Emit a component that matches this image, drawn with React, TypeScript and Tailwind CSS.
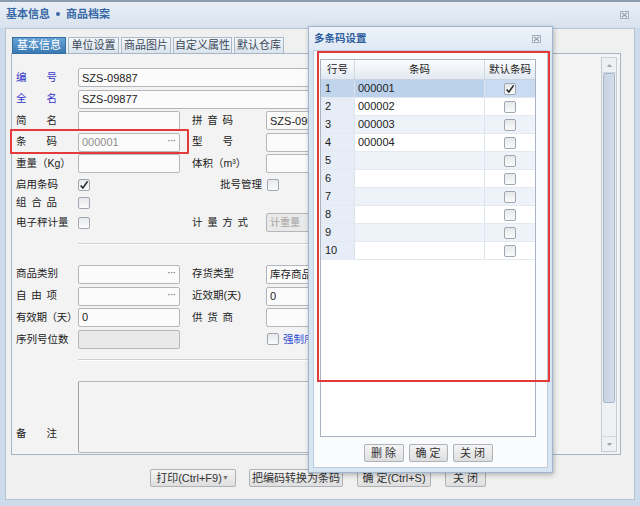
import React from "react";

const CloseIcon = () => (
  <svg width="9" height="8" viewBox="0 0 9 8">
    <rect x="0.5" y="0.5" width="8" height="7" fill="none" stroke="#a7b0ba" strokeWidth="1" />
    <path d="M2 1.8 L7 6.2 M7 1.8 L2 6.2" stroke="#8c97a3" strokeWidth="1.1" />
  </svg>
);

const Check = ({ checked }: { checked?: boolean }) => (
  <div className="w-[12px] h-[12px] border border-[#a0a7b0] rounded-[2px] bg-gradient-to-b from-[#e6e8ea] to-[#fbfbfb] flex items-center justify-center">
    {checked && (
      <svg width="10" height="10" viewBox="0 0 10 10">
        <path d="M1.6 5.4 L3.9 8 L8.6 1.4" stroke="#222" strokeWidth="1.5" fill="none" />
      </svg>
    )}
  </div>
);

function Spread({ t, className }: { t: string; className: string }) {
  return (
    <div className={"flex justify-between " + className}>
      {t.split("").map((c, i) => (
        <span key={i}>{c}</span>
      ))}
    </div>
  );
}

function Inp({
  className,
  children,
  dis,
  dots,
  muted,
}: {
  className: string;
  children?: React.ReactNode;
  dis?: boolean;
  dots?: boolean;
  muted?: boolean;
}) {
  return (
    <div
      className={
        "h-[19px] border border-[#b3b6bb] rounded-[2px] flex items-center justify-between pl-[3px] pr-[4px] text-[11px] whitespace-nowrap font-['Liberation_Sans','Noto_Sans_CJK_SC',sans-serif] " +
        (dis ? "bg-[#e9e9e9] " : "bg-[#fbfbfb] ") +
        (muted ? "text-[#8e8e8e] " : "text-[#222] ") +
        className
      }
    >
      <span className="truncate">{children}</span>
      {dots && <span className="text-[#666] tracking-[-1px] leading-none pb-[3px]">···</span>}
    </div>
  );
}

function Btn({ className, children }: { className: string; children: React.ReactNode }) {
  return (
    <div
      className={
        "h-[18px] border border-[#afb2b6] rounded-[2px] bg-gradient-to-b from-[#f5f5f5] to-[#dedede] flex items-center justify-center text-[11px] text-[#333] shrink-0 whitespace-nowrap " +
        className
      }
    >
      {children}
    </div>
  );
}

const LBL = "w-[62px] shrink-0 text-[10.5px] text-[#222] whitespace-nowrap";
const RLBL = "w-[74px] shrink-0 text-[10.5px] text-[#222] whitespace-nowrap";

export default function App() {
  const rows = Array.from({ length: 10 }, (_, i) => i + 1);
  const codes: Record<number, string> = { 1: "000001", 2: "000002", 3: "000003", 4: "000004" };

  return (
    <div className="w-[640px] h-[506px] relative overflow-hidden bg-[#cddbea] font-['Liberation_Sans','Noto_Sans_CJK_SC',sans-serif] text-[#222] select-none">
      {/* title bar */}
      <div className="h-[28px] border-t-[2px] border-[#8b9cb1] bg-gradient-to-b from-[#e9eff6] to-[#d8e2ed] flex items-center justify-between pl-[6px] pr-[11px]">
        <div className="text-[11px] font-bold text-[#3868a6] flex items-center gap-[6px] pb-[2px]">
          <span>基本信息</span>
          <span className="w-[4px] h-[4px] rounded-full bg-[#3868a6]" />
          <span>商品档案</span>
        </div>
        <CloseIcon />
      </div>

      {/* window body */}
      <div className="mx-[5px] h-[472px] bg-[#f0f0f0] border border-[#b4c4d6] flex flex-col pl-[5px] pt-[8px]">
        {/* tabs */}
        <div className="h-[17px] flex items-end gap-[2px] pl-[1px] relative z-10 -mb-[1px]">
          <div className="w-[54px] h-[17px] bg-gradient-to-b from-[#67a3d6] to-[#3a79b3] border border-[#356ea3] text-white text-[11px] flex items-center justify-center">
            基本信息
          </div>
          {[
            ["单位设置", "w-[51px]"],
            ["商品图片", "w-[50px]"],
            ["自定义属性", "w-[59px]"],
            ["默认仓库", "w-[50px]"],
          ].map(([t, w]) => (
            <div
              key={t}
              className={
                w +
                " h-[17px] bg-gradient-to-b from-[#f4f7fa] to-[#dae3ec] border border-[#a9bacb] border-b-[#a8b5c4] text-[#3b4a5b] text-[11px] flex items-center justify-center"
              }
            >
              {t}
            </div>
          ))}
        </div>

        {/* tab panel */}
        <div className="w-[610px] h-[402px] border border-[#a8b5c4] bg-[#f3f3f3] flex">
          <div className="flex-1 pl-[4px] pt-[13px] overflow-hidden">
            <div className="flex items-center h-[21.5px]">
              <Spread t="编号" className="w-[41px] mr-[21px] shrink-0 text-[10.5px] text-[#3535c8]" />
              <Inp className="w-[462px]">SZS-09887</Inp>
            </div>
            <div className="flex items-center h-[21.5px]">
              <Spread t="全名" className="w-[41px] mr-[21px] shrink-0 text-[10.5px] text-[#3535c8]" />
              <Inp className="w-[462px]">SZS-09877</Inp>
            </div>
            <div className="flex items-center h-[21.5px]">
              <Spread t="简名" className="w-[41px] mr-[21px] shrink-0 text-[10.5px]" />
              <Inp className="w-[102px]" />
              <div className="w-[12px] shrink-0" />
              <div className={RLBL}>
                <Spread t="拼音码" className="w-[41px]" />
              </div>
              <Inp className="w-[102px]">SZS-09877</Inp>
            </div>
            <div className="flex items-center h-[21.5px]">
              <Spread t="条码" className="w-[41px] mr-[21px] shrink-0 text-[10.5px]" />
              <Inp className="w-[102px]" dots muted>
                000001
              </Inp>
              <div className="w-[12px] shrink-0" />
              <div className={RLBL}>
                <Spread t="型号" className="w-[41px]" />
              </div>
              <Inp className="w-[102px]" />
            </div>
            <div className="flex items-center h-[21.5px]">
              <div className={LBL}>重量（Kg）</div>
              <Inp className="w-[102px]" />
              <div className="w-[12px] shrink-0" />
              <div className={RLBL}>体积（m³）</div>
              <Inp className="w-[102px]" />
            </div>
            <div className="flex items-center h-[19.5px] pt-[2px]">
              <div className={LBL}>启用条码</div>
              <Check checked />
              <div className="w-[102px] shrink-0" />
              <div className="w-[70px] shrink-0 text-[10.5px] text-right">批号管理</div>
              <div className="w-[5px] shrink-0" />
              <Check />
            </div>
            <div className="flex items-center h-[17px]">
              <Spread t="组合品" className="w-[41px] mr-[21px] shrink-0 text-[10.5px]" />
              <Check />
            </div>
            <div className="flex items-center h-[23px]">
              <div className={LBL}>电子秤计量</div>
              <Check />
              <div className="w-[102px] shrink-0" />
              <div className={RLBL}>
                <Spread t="计量方式" className="w-[56px]" />
              </div>
              <Inp className="w-[102px]" dis muted>
                <span className="text-[10px] text-[#a5a5a5]">计重量</span>
              </Inp>
            </div>

            <div className="ml-[62px] w-[462px] h-0 border-t border-[#cfcfcf] border-b border-b-white mt-[8.5px]" />

            <div className="mt-[19px]">
              <div className="flex items-center h-[21.7px]">
                <div className={LBL}>商品类别</div>
                <Inp className="w-[102px]" dots />
                <div className="w-[12px] shrink-0" />
                <div className={RLBL}>存货类型</div>
                <Inp className="w-[102px]">
                  <span className="text-[10.5px]">库存商品</span>
                </Inp>
              </div>
              <div className="flex items-center h-[21.7px]">
                <Spread t="自由项" className="w-[41px] mr-[21px] shrink-0 text-[10.5px]" />
                <Inp className="w-[102px]" dots />
                <div className="w-[12px] shrink-0" />
                <div className={RLBL}>近效期(天)</div>
                <Inp className="w-[102px]">0</Inp>
              </div>
              <div className="flex items-center h-[21.7px]">
                <div className={LBL + " tracking-[-0.3px]"}>有效期（天）</div>
                <Inp className="w-[102px]">0</Inp>
                <div className="w-[12px] shrink-0" />
                <div className={RLBL}>
                  <Spread t="供货商" className="w-[41px]" />
                </div>
                <Inp className="w-[102px]" />
              </div>
              <div className="flex items-center h-[21.7px]">
                <div className={LBL}>序列号位数</div>
                <Inp className="w-[102px]" dis />
                <div className="w-[12px] shrink-0" />
                <div className="w-[74px] shrink-0" />
                <div className="flex items-center gap-[4px] pl-[1px]">
                  <Check />
                  <span className="text-[10.5px] text-[#2f4ed6] whitespace-nowrap">强制序列号</span>
                </div>
              </div>
            </div>

            <div className="ml-[62px] w-[462px] h-0 border-t border-[#cfcfcf] border-b border-b-white mt-[9px]" />

            <div className="flex mt-[20px]">
              <div className="w-[62px] shrink-0 h-[72px] flex items-end pb-[12px]">
                <Spread t="备注" className="w-[41px] text-[10.5px]" />
              </div>
              <div className="w-[462px] h-[72px] border border-[#b3b6bb] border-l-[#9ea3aa] bg-[#f4f4f4] rounded-[2px]" />
            </div>
          </div>

          {/* scrollbar */}
          <div className="w-[16px] h-[395px] mt-[3px] mr-[3px] border border-[#c9cdd3] bg-[#eef0f3] flex flex-col">
            <div className="h-[15px] flex items-center justify-center border-b border-[#d3d7dc]">
              <svg width="5" height="3" viewBox="0 0 5 3">
                <path d="M0 3 L2.5 0 L5 3 Z" fill="#9aa2ac" />
              </svg>
            </div>
            <div className="mx-[1px] h-[330px] bg-gradient-to-r from-[#c7d3e3] to-[#d3ddea] border border-[#a8b6c9] rounded-[2px]" />
            <div className="flex-1" />
            <div className="h-[15px] flex items-center justify-center border-t border-[#d3d7dc]">
              <svg width="5" height="3" viewBox="0 0 5 3">
                <path d="M0 0 L2.5 3 L5 0 Z" fill="#9aa2ac" />
              </svg>
            </div>
          </div>
        </div>

        {/* bottom buttons */}
        <div className="flex mt-[14px] pl-[139px]">
          <Btn className="w-[86px] justify-between pl-[5px] pr-[6px] text-[10.5px]">
            <span>打印(Ctrl+F9)</span>
            <span className="text-[7px] text-[#777]">▼</span>
          </Btn>
          <Btn className="w-[94px] ml-[13px] text-[10.5px]">把编码转换为条码</Btn>
          <Btn className="w-[74px] ml-[14px] text-[10.5px]">确 定(Ctrl+S)</Btn>
          <Btn className="w-[41px] ml-[14px] text-[10.5px]">关 闭</Btn>
        </div>
      </div>

      {/* red annotation on 条码 row */}
      <div className="absolute left-[10px] top-[129px] w-[179px] h-[25px] border-[2px] border-[#e33a3a] rounded-[1px] pointer-events-none" />

      {/* dialog window */}
      <div className="absolute left-[308px] top-[26px] w-[245px] h-[447px] border border-[#9fb6cf] bg-[#d7e5f3] shadow-[1px_2px_5px_rgba(0,0,0,0.25)] flex flex-col">
        <div className="h-[23px] shrink-0 flex items-center justify-between pl-[5px] pr-[11px] bg-gradient-to-b from-[#eef3f9] to-[#dfe9f4]">
          <span className="text-[10.5px] font-bold text-[#2d5d9e]">多条码设置</span>
          <CloseIcon />
        </div>
        <div className="mx-[4px] mb-[4px] flex-1 bg-[#fafbfc] border border-[#bccde0] pt-[8px] pl-[6px]">
          <div className="w-[216px] h-[378px] border border-[#aab3bf] bg-white flex flex-col">
            <div className="h-[20px] shrink-0 flex bg-gradient-to-b from-[#fbfcfe] to-[#e2e9f2] border-b border-[#c9d3df] text-[10.5px] text-[#222]">
              <div className="w-[34px] flex items-center justify-center border-r border-[#d1d9e3]">行号</div>
              <div className="w-[130px] flex items-center justify-center border-r border-[#d1d9e3]">条码</div>
              <div className="flex-1 flex items-center justify-center">默认条码</div>
            </div>
            {rows.map((r) => {
              const sel = r === 1;
              const odd = r % 2 === 1;
              return (
                <div
                  key={r}
                  className={
                    "h-[18px] shrink-0 flex text-[11px] border-b border-[#e4e9ef] " +
                    (sel ? "bg-[#c9dbf0]" : odd ? "bg-[#eef3fa]" : "bg-white")
                  }
                >
                  <div
                    className={
                      "w-[34px] flex items-center pl-[4px] border-r border-[#dde4ec] " +
                      (sel ? "bg-[#c0d4ec]" : "bg-[#e6edf6]")
                    }
                  >
                    {r}
                  </div>
                  <div
                    className={
                      "w-[130px] flex items-center pl-[3px] border-r border-[#dde4ec] " +
                      (sel ? "bg-[#bcd2ec]" : "")
                    }
                  >
                    {codes[r] || ""}
                  </div>
                  <div className="flex-1 flex items-center justify-center">
                    <Check checked={sel} />
                  </div>
                </div>
              );
            })}
          </div>
          <div className="flex justify-center gap-[5px] w-[216px] mt-[7px]">
            <Btn className="w-[40px] h-[17px] text-[10.5px]">删 除</Btn>
            <Btn className="w-[39px] h-[17px] text-[10.5px]">确 定</Btn>
            <Btn className="w-[40px] h-[17px] text-[10.5px]">关 闭</Btn>
          </div>
        </div>
      </div>

      {/* red annotation in dialog */}
      <div className="absolute left-[317px] top-[51px] w-[233px] h-[331px] border-[2px] border-[#e33a3a] pointer-events-none" />
    </div>
  );
}
